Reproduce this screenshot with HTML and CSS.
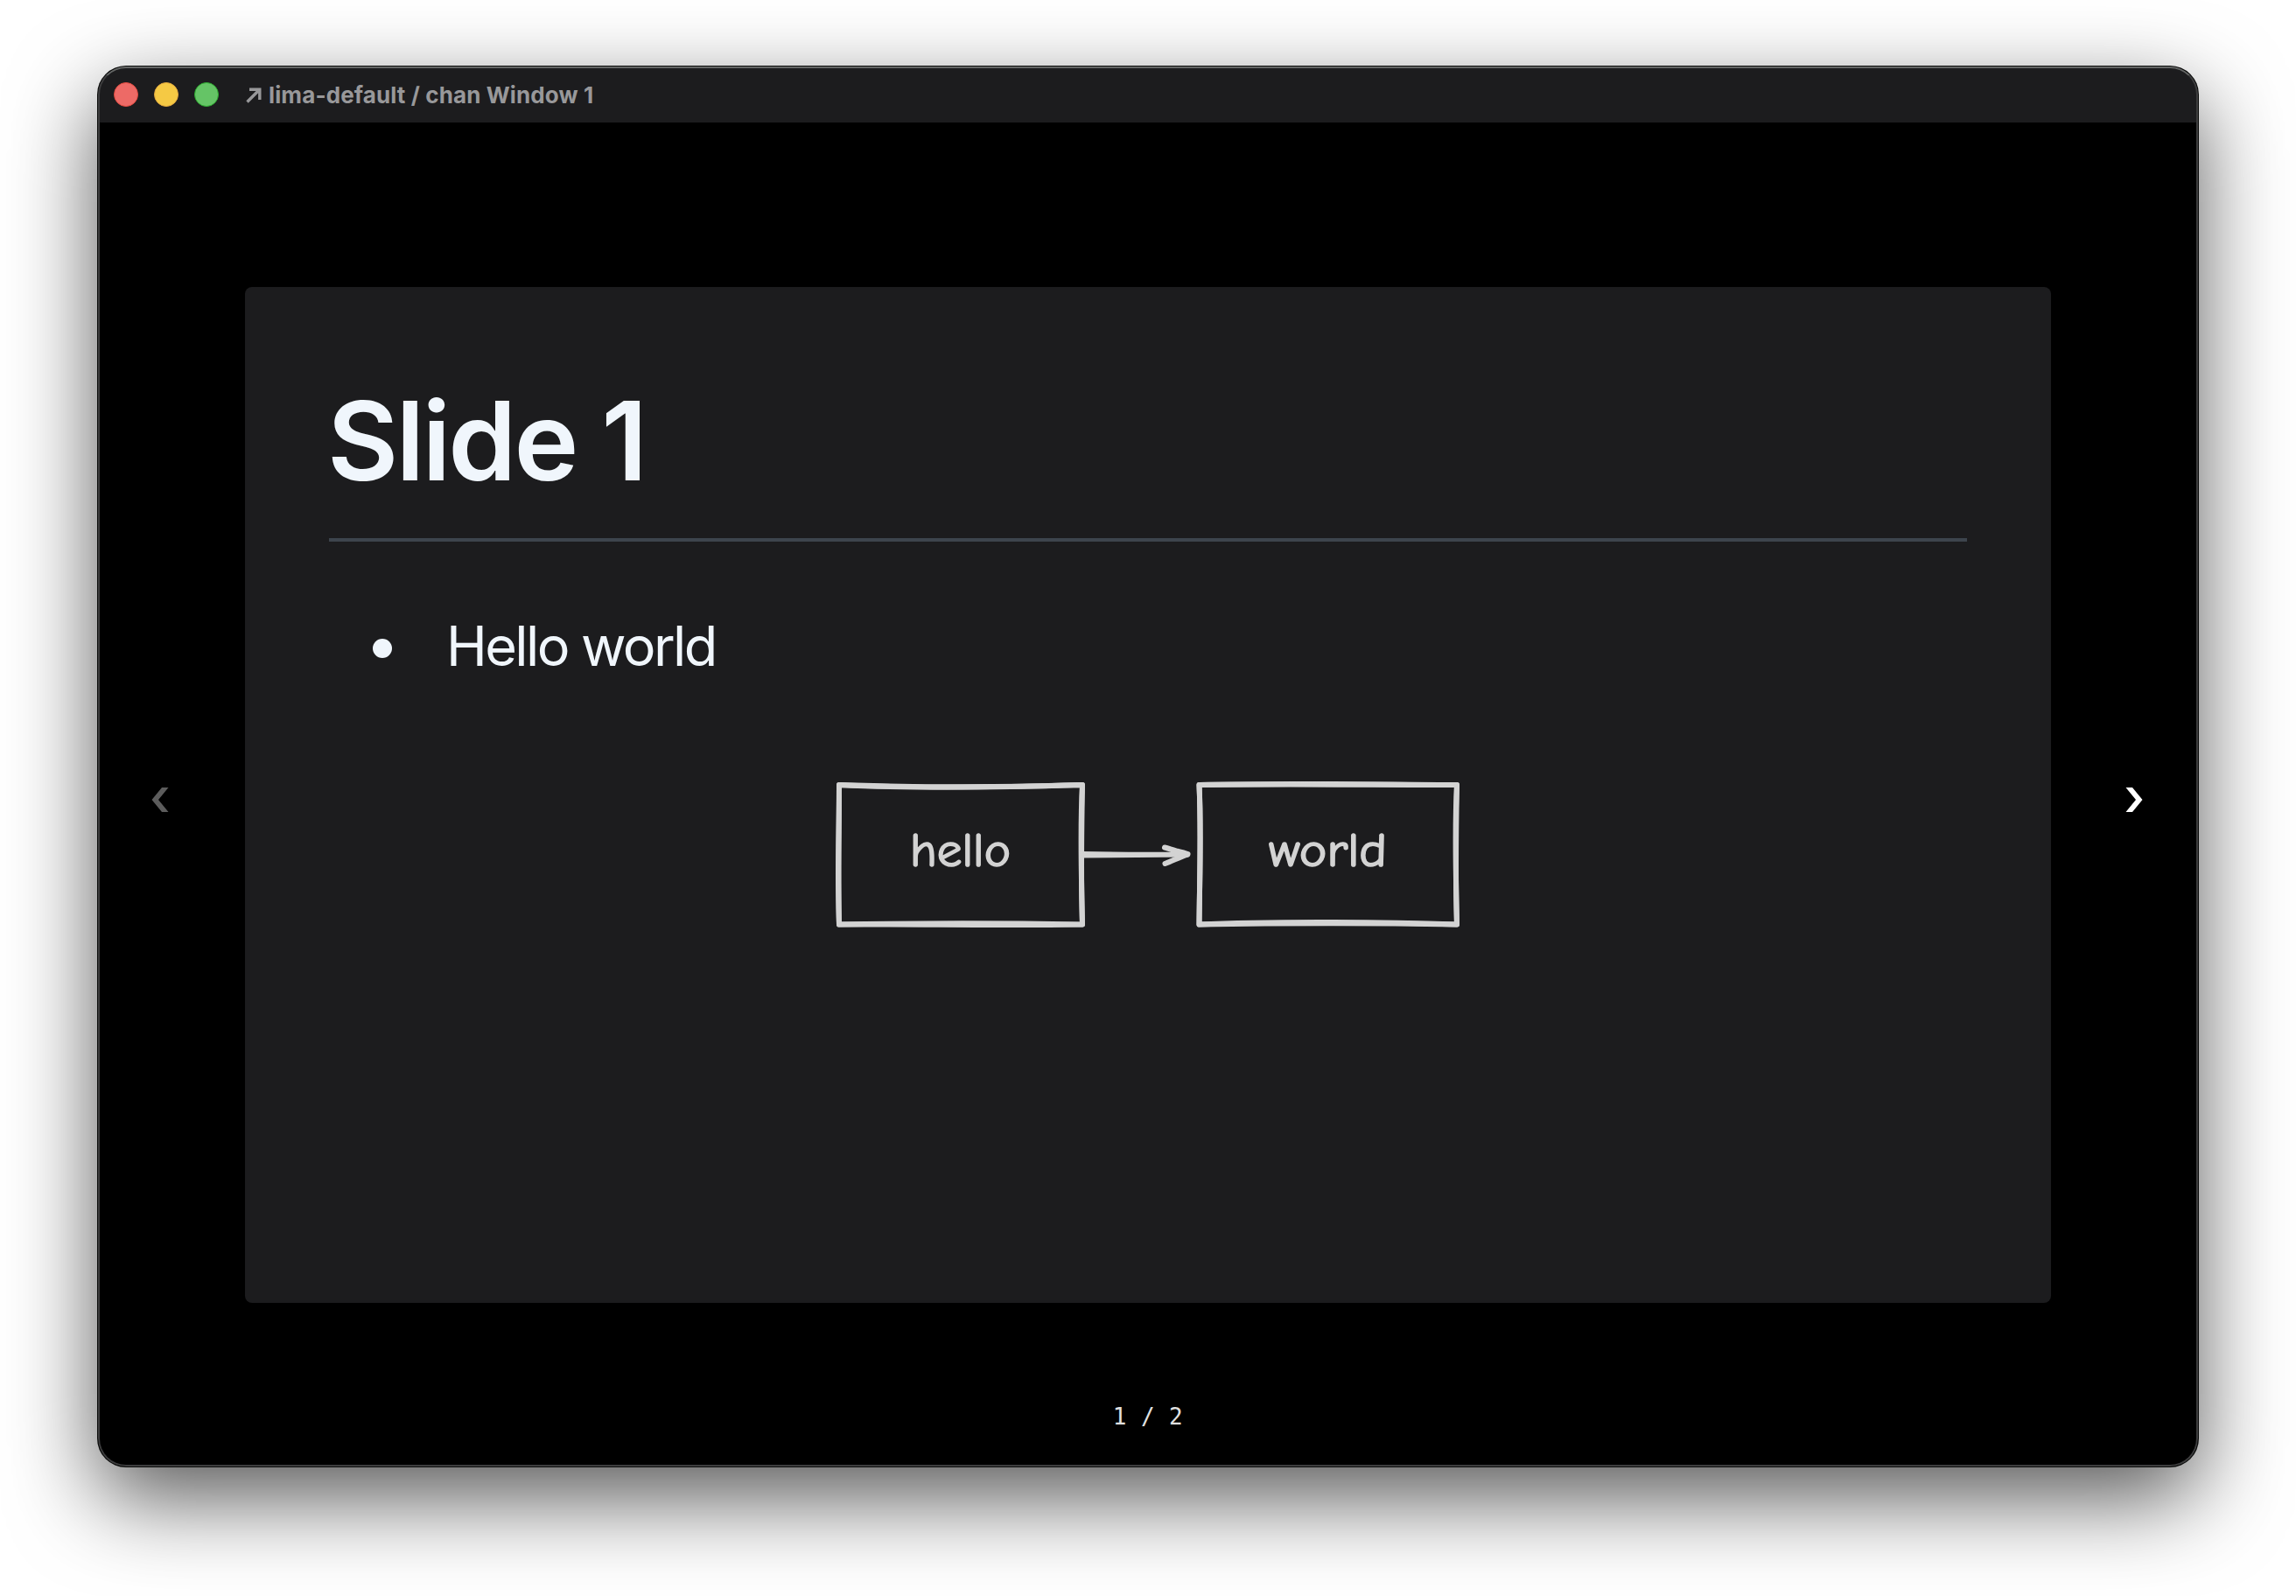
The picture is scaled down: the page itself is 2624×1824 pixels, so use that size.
FILE: index.html
```html
<!DOCTYPE html>
<html lang="en">
<head>
    <meta charset="UTF-8">
    <title>lima-default / chan Window 1</title>
    <link rel="stylesheet" href="styles.css">
</head>
<body>
    <div class="window">
        <header class="titlebar">
            <span class="dot close"></span>
            <span class="dot minimize"></span>
            <span class="dot zoom"></span>
            <svg class="link-arrow" width="18" height="18" viewBox="0 0 18 18">
                <path d="M1.5 16.5L15 3M4 2.2H15.8V14" />
            </svg>
            <span class="title">lima-default / chan Window 1</span>
        </header>
        <main class="stage">
            <button class="nav prev" aria-label="Previous slide" disabled>
                <svg width="20" height="30" viewBox="0 0 20 30"><path d="M0.5 15L12 1H19.5L8 15L19.5 29H12Z" /></svg>
            </button>
            <section class="slide">
                <h1>Slide 1</h1>
                <ul>
                    <li>Hello world</li>
                </ul>
                <svg class="diagram" width="724" height="180" viewBox="950 887 724 180">
                    <!-- hello -->
                    <path d="M959 897C1040 901 1140 900 1237 897C1234 950 1236 1000 1237 1056.5C1150 1055 1050 1055 959 1056.5C956.5 1000 959 950 959 897Z" />
                    <path d="M959 897C1050 900 1150 900 1237 897M1237 897C1236 960 1235 1000 1237 1056.5M1237 1056.5C1140 1058 1050 1056 959 1056.5M959 1056.5C958 1000 959 950 959 897" />
                    <!-- arrow -->
                    <path d="M1237 976C1280 977 1320 977 1357 976.5M1237 977.5C1280 977 1320 976.5 1357 976.5" />
                    <path d="M1331 968.5C1340 972 1349 973 1357.5 976C1349 980 1340 983 1331.5 987M1331 968.5C1340 971 1349 974 1357.5 976.5C1349 979 1340 984 1331.5 987" />
                    <!-- world -->
                    <path d="M1370.5 897C1460 894.5 1570 896.5 1665 897C1662 950 1664 1000 1665 1056.5C1570 1053 1440 1053 1370.5 1056.5C1371 1000 1373 950 1370.5 897Z" />
                    <path d="M1370.5 897C1470 896 1570 897 1665 897M1665 897C1664 950 1663 1000 1665 1056.5M1665 1056.5C1570 1055 1470 1055 1370.5 1056.5M1370.5 1056.5C1371 1000 1373 950 1370.5 897" />
                    <text x="1040" y="990" textLength="115" lengthAdjust="spacingAndGlyphs">hello</text>
                    <text x="1450" y="990" textLength="135" lengthAdjust="spacingAndGlyphs">world</text>
                </svg>
            </section>
            <button class="nav next" aria-label="Next slide">
                <svg width="20" height="30" viewBox="0 0 20 30"><path d="M19.5 15L8 1H0.5L12 15L0.5 29H8Z" /></svg>
            </button>
        </main>
        <footer class="pager">1 / 2</footer>
    </div>
</body>
</html>
```

FILE: styles.css
```css
* {
    box-sizing: border-box;
}
body {
    min-height: 100vh;
    margin: 0;
    padding: 76px 112px;
    background: #fff;
    font-family: Inter, "Liberation Sans", sans-serif;
    overflow: hidden;
}
.window {
    position: relative;
    display: flex;
    flex-direction: column;
    width: 2400px;
    height: 1600px;
    background: #000;
    border-radius: 32px;
    overflow: hidden;
    box-shadow: 0 0 0 1px #0c0d0c, 0 36px 100px rgba(0, 0, 0, 0.66);
}
/* light rim drawn over the title bar and the content */
.window::after {
    content: "";
    position: absolute;
    inset: 0;
    border: 2px solid #3d3d3e;
    border-top-color: #646665;
    border-radius: 32px;
    pointer-events: none;
}
.titlebar {
    display: flex;
    align-items: center;
    height: 64px;
    padding-left: 18px;
    background: #1c1c1e;
}
.dot {
    width: 28px;
    height: 28px;
    margin-right: 18px;
    border-radius: 50%;
}
.close {
    background: #ed6a66;
    border: 1px solid #e24b41;
}
.minimize {
    background: #f5c944;
    border: 1px solid #e1a73e;
}
.zoom {
    background: #65c466;
    border: 1px solid #2dac2f;
}
.link-arrow {
    margin: 2px 8px 0 13px;
    fill: none;
    stroke: #98989a;
    stroke-width: 3.4;
}
.title {
    margin-top: 2px;
    color: #98989a;
    font-size: 26px;
    font-weight: 700;
    line-height: 32px;
    letter-spacing: 0.12px;
}
.stage {
    display: flex;
    align-items: center;
    justify-content: space-between;
    height: 1161px;
    margin-top: 188px;
    padding: 0 63px 0 61px;
}
.nav {
    display: flex;
    margin-top: 11px;
    padding: 0;
    background: none;
    border: none;
    fill: #fff;
}
.prev {
    margin-right: 2px;
    fill: #5c5c5c;
}
.slide {
    width: 2064px;
    height: 1161px;
    padding: 96px;
    background: #1c1c1e;
    border-radius: 8px;
    color: #f0f6fc;
}
h1 {
    height: 195px;
    margin: 0 0 87px;
    padding-top: 5px;
    border-bottom: 4px solid #3d444d;
    font-size: 125px;
    font-weight: 600;
    line-height: 150px;
    letter-spacing: -2.8px;
    text-indent: -2px;
}
ul {
    margin: 0;
    padding: 0;
    list-style: none;
}
li {
    display: flex;
    align-items: center;
    height: 64px;
    padding-left: 50px;
    font-size: 63px;
    letter-spacing: -2.6px;
}
li::before {
    content: "";
    width: 22px;
    height: 22px;
    margin: 6px 62px 0 0;
    border-radius: 50%;
    background: #f0f6fc;
}
.diagram {
    display: block;
    margin: 117px auto 0;
}
.diagram path {
    fill: none;
    stroke: #d3d3d3;
    stroke-width: 6;
    stroke-linecap: round;
    stroke-linejoin: round;
}
.diagram text {
    fill: #d3d3d3;
    stroke: #d3d3d3;
    stroke-width: 1.6;
    stroke-linejoin: round;
    font-family: Excalifont, "Comic Neue", Lato, sans-serif;
    font-size: 54px;
    font-weight: 500;
}
.pager {
    margin-top: 114px;
    color: #e0e0e0;
    font-family: "DejaVu Sans Mono", monospace;
    font-size: 26px;
    line-height: 32px;
    letter-spacing: 0.4px;
    text-align: center;
}
```
